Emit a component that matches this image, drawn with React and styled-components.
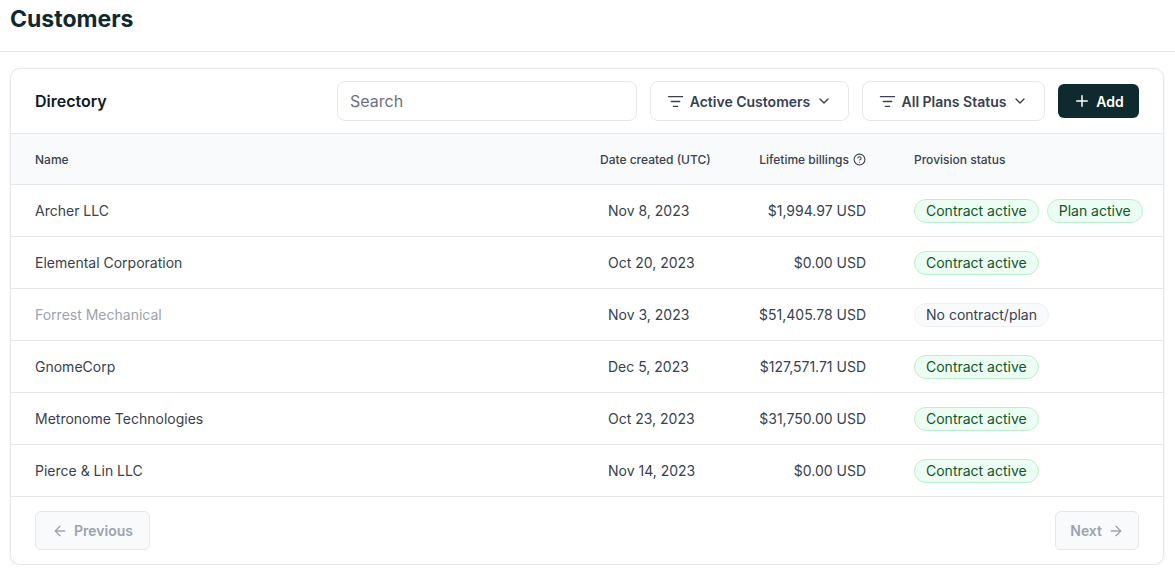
import React from 'react';
import styled, {createGlobalStyle} from 'styled-components';
import {ListFilter, ChevronDown, Plus, ArrowLeft, ArrowRight, CircleHelp} from 'lucide-react';

const Global = createGlobalStyle`
  body { margin: 0; background: #fff; font-family: Inter, "Noto Sans", sans-serif; color: #374151; }
  * { box-sizing: border-box; }
`;

const Page = styled.div`
  width: 1175px;
`;
const TitleBar = styled.div`
  height: 52px;
  padding: 5px 10px 0;
  border-bottom: 1px solid #e5e7eb;
`;
const Title = styled.h1`
  margin: 0;
  font-size: 23px;
  font-weight: 700;
  color: #0f2a2e;
`;
const Card = styled.div`
  margin: 16px 11px 0 10px;
  border: 1px solid #e5e7eb;
  border-radius: 10px;
  box-shadow: 0 1px 3px rgba(16, 24, 40, 0.08);
  overflow: hidden;
`;
const Toolbar = styled.div`
  height: 64px;
  display: flex;
  align-items: center;
  gap: 13px;
  padding: 0 24px;
`;
const Heading = styled.div`
  flex: 1;
  font-size: 16px;
  font-weight: 600;
  color: #111827;
`;
const Search = styled.input`
  width: 300px;
  height: 40px;
  border: 1px solid #e5e7eb;
  border-radius: 8px;
  padding: 0 12px;
  font: inherit;
  font-size: 16px;
  color: #111827;
  &::placeholder { color: #6b7280; }
`;
const Filter = styled.button`
  height: 40px;
  width: ${p => p.$w}px;
  display: flex;
  align-items: center;
  justify-content: center;
  gap: 6px;
  border: 1px solid #e5e7eb;
  border-radius: 8px;
  background: #fff;
  font: inherit;
  font-size: 14px;
  font-weight: 600;
  color: #374151;
`;
const AddButton = styled.button`
  height: 34px;
  width: 81px;
  display: flex;
  align-items: center;
  justify-content: center;
  gap: 5px;
  border: none;
  border-radius: 6px;
  background: #0f2a2e;
  color: #fff;
  font: inherit;
  font-size: 14px;
  font-weight: 600;
`;
const Row = styled.div`
  display: grid;
  grid-template-columns: 1fr 130px 136px 273px;
  align-items: center;
  padding: 0 24px;
  height: ${p => (p.$head ? 51 : 52)}px;
  border-top: 1px solid #e5e7eb;
  background: ${p => (p.$head ? '#f9fafb' : '#fff')};
  font-size: ${p => (p.$head ? 12 : 14)}px;
  font-weight: ${p => (p.$head ? 500 : 400)};
  color: #374151;
`;
const Cell = styled.div`
  padding-left: ${p => p.$pl || 0}px;
  color: ${p => (p.$muted ? '#9ca3af' : 'inherit')};
  display: flex;
  align-items: center;
  justify-content: ${p => (p.$right ? 'flex-end' : 'flex-start')};
  gap: 8px;
  white-space: nowrap;
`;
const Badge = styled.span`
  display: inline-flex;
  align-items: center;
  height: 24px;
  padding: 0 11px;
  border-radius: 999px;
  font-size: 14px;
  white-space: nowrap;
  border: 1px solid ${p => (p.$none ? '#eef0f3' : '#bbf0cf')};
  background: ${p => (p.$none ? '#f9fafb' : '#ecfdf3')};
  color: ${p => (p.$none ? '#374151' : '#14532d')};
`;
const Footer = styled.div`
  height: 68px;
  display: flex;
  align-items: center;
  justify-content: space-between;
  padding: 0 24px;
  border-top: 1px solid #e5e7eb;
`;
const PageButton = styled.button`
  height: 39px;
  padding: 0 ${p => p.$px}px;
  display: flex;
  align-items: center;
  gap: 6px;
  border: 1px solid #e5e7eb;
  border-radius: 6px;
  background: #f9fafb;
  color: #9ca3af;
  font: inherit;
  font-size: 14px;
  font-weight: 600;
`;

const data = [
  ['Archer LLC', 'Nov 8, 2023', '$1,994.97 USD', ['Contract active', 'Plan active']],
  ['Elemental Corporation', 'Oct 20, 2023', '$0.00 USD', ['Contract active']],
  ['Forrest Mechanical', 'Nov 3, 2023', '$51,405.78 USD', null],
  ['GnomeCorp', 'Dec 5, 2023', '$127,571.71 USD', ['Contract active']],
  ['Metronome Technologies', 'Oct 23, 2023', '$31,750.00 USD', ['Contract active']],
  ['Pierce & Lin LLC', 'Nov 14, 2023', '$0.00 USD', ['Contract active']],
];

export default function App() {
  return (
    <Page>
      <Global />
      <TitleBar><Title>Customers</Title></TitleBar>
      <Card>
        <Toolbar>
          <Heading>Directory</Heading>
          <Search placeholder="Search" />
          <Filter $w={199}><ListFilter size={17} strokeWidth={1.8} />Active Customers<ChevronDown size={16} /></Filter>
          <Filter $w={183}><ListFilter size={17} strokeWidth={1.8} />All Plans Status<ChevronDown size={16} /></Filter>
          <AddButton><Plus size={18} />Add</AddButton>
        </Toolbar>
        <Row $head>
          <Cell>Name</Cell>
          <Cell>Date created (UTC)</Cell>
          <Cell $right>Lifetime billings <CircleHelp size={13} style={{marginLeft: -4}} /></Cell>
          <Cell $pl={48}>Provision status</Cell>
        </Row>
        {data.map(([name, date, amt, status]) => (
          <Row key={name}>
            <Cell $muted={!status}>{name}</Cell>
            <Cell $pl={8}>{date}</Cell>
            <Cell $right>{amt}</Cell>
            <Cell $pl={48}>
              {status ? status.map(s => <Badge key={s}>{s}</Badge>) : <Badge $none>No contract/plan</Badge>}
            </Cell>
          </Row>
        ))}
        <Footer>
          <PageButton $px={16}><ArrowLeft size={16} />Previous</PageButton>
          <PageButton $px={14}>Next<ArrowRight size={16} /></PageButton>
        </Footer>
      </Card>
    </Page>
  );
}
